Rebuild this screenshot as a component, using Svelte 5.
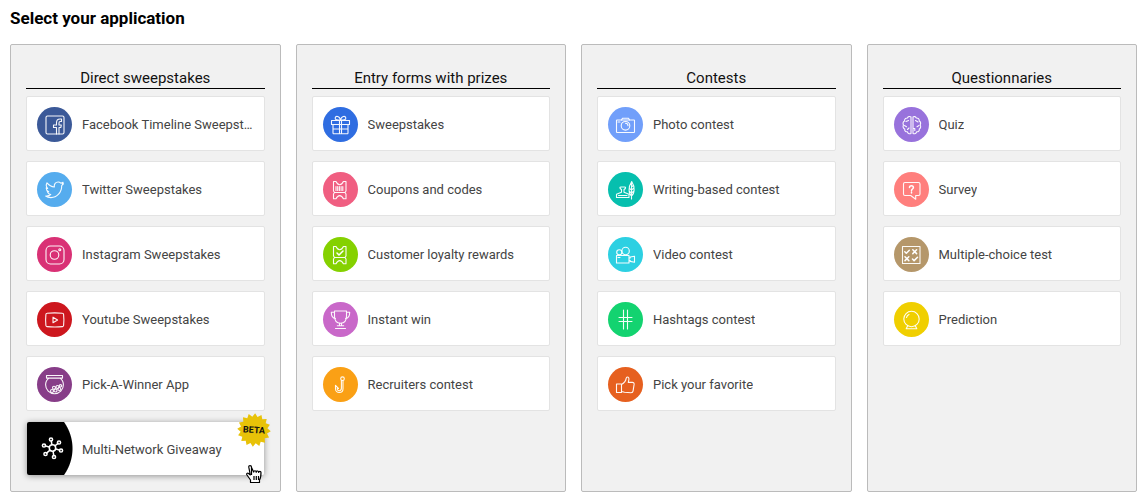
<script>
  const columns = [
    {
      title: 'Direct sweepstakes',
      apps: [
        { name: 'Facebook Timeline Sweepstakes', icon: 'facebook', color: '#3b5998' },
        { name: 'Twitter Sweepstakes', icon: 'twitter', color: '#55acee' },
        { name: 'Instagram Sweepstakes', icon: 'instagram', color: '#d93175' },
        { name: 'Youtube Sweepstakes', icon: 'youtube', color: '#cd171e' },
        { name: 'Pick-A-Winner App', icon: 'bowl', color: '#873d88' },
        { name: 'Multi-Network Giveaway', icon: 'network', color: '#000', beta: true },
      ],
    },
    {
      title: 'Entry forms with prizes',
      apps: [
        { name: 'Sweepstakes', icon: 'gift', color: '#2f6de1' },
        { name: 'Coupons and codes', icon: 'coupon', color: '#f05e81' },
        { name: 'Customer loyalty rewards', icon: 'loyalty', color: '#85d100' },
        { name: 'Instant win', icon: 'trophy', color: '#c968c9' },
        { name: 'Recruiters contest', icon: 'hook', color: '#faa015' },
      ],
    },
    {
      title: 'Contests',
      apps: [
        { name: 'Photo contest', icon: 'camera', color: '#719ffa' },
        { name: 'Writing-based contest', icon: 'writing', color: '#06bfae' },
        { name: 'Video contest', icon: 'video', color: '#2dd0e2' },
        { name: 'Hashtags contest', icon: 'hashtag', color: '#13d370' },
        { name: 'Pick your favorite', icon: 'thumb', color: '#e6601f' },
      ],
    },
    {
      title: 'Questionnaries',
      apps: [
        { name: 'Quiz', icon: 'brain', color: '#9872dc' },
        { name: 'Survey', icon: 'survey', color: '#ff7f7d' },
        { name: 'Multiple-choice test', icon: 'choices', color: '#b5976a' },
        { name: 'Prediction', icon: 'ball', color: '#f0cf00' },
      ],
    },
  ];

  // starburst behind the beta label
  const burst = Array.from({ length: 32 }, (_, i) => {
    const r = i % 2 ? 13.5 : 16.8;
    const a = (i * Math.PI) / 16;
    return `${(17 + r * Math.cos(a)).toFixed(1)},${(17 + r * Math.sin(a)).toFixed(1)}`;
  }).join(' ');

  // the six arms of the network glyph
  const nodes = [[-1.5, -8.5], [6.5, -5.5], [8.5, 2.5], [1.5, 9], [-7, 6], [-8.5, -2.5]];
</script>

{#snippet glyph(icon)}
  <svg class="glyph" viewBox="0 0 35 35" aria-hidden="true">
    {#if icon === 'facebook'}
      <rect x="9" y="9" width="18" height="18" rx="1.5" />
      <path d="M19.5 27v-6.5h-3V18h3v-2.2c0-2.3 1.4-3.8 3.6-3.8h1.4v2.5h-1.2c-.9 0-1.3.5-1.3 1.4V18h2.3l-.4 2.5H22V27" />
    {:else if icon === 'twitter'}
      <path d="M26.5 11.7c-.6 1-1.3 1.4-1.8 1.9.2 7-5 12-10.7 12-2.3 0-4.1-.6-5.3-1.6 2 .2 3.8-.3 5-1.5-1.7-.2-2.9-1.2-3.4-2.8h1.4c-1.7-.8-2.5-2-2.5-3.8l1.5.5c-1.5-1.5-1.8-3.7-.7-5.5 2 2.5 4.3 3.9 7.3 4.1-.4-2.9 1.3-5 3.8-5 1.2 0 2 .5 2.7 1.2l2.300-.9-.8 1.600z" />
    {:else if icon === 'instagram'}
      <rect x="9" y="9" width="18" height="18" rx="4.5" />
      <circle cx="17.5" cy="18" r="4.3" />
      <circle cx="22.8" cy="12.7" r="1" />
    {:else if icon === 'youtube'}
      <path d="M10 11.3q7.5-.8 15.5 0 1 0 1.1 1.2.6 5.5 0 11-.1 1-1.1 1.1-7.5.8-15.5 0-1-.1-1.1-1.1-.6-5.5 0-11 .1-1.2 1.1-1.2zM16 15.200v5.600l4.600-2.800z" />
    {:else if icon === 'bowl'}
      <path d="M9.5 8.500h16v2.600h-16zM12 11.100c-2.200 1.600-3.400 4-3.400 6.700 0 5 4 8.900 8.900 8.900s8.900-3.900 8.900-8.900c0-2.700-1.200-5.100-3.400-6.700" />
      <circle cx="15" cy="24" r="1.5" />
      <circle cx="18.5" cy="23.5" r="1.5" />
      <circle cx="17" cy="20.8" r="1.5" />
      <circle cx="20.5" cy="20" r="1.5" />
      <circle cx="22.3" cy="22" r="1.5" />
      <circle cx="23.5" cy="18.8" r="1.2" />
    {:else if icon === 'network'}
      <g class="bold">
        <circle cx="15.5" cy="16" r="3.2" />
        {#each nodes as [x, y]}
          <path d="M{15.5 + x * 0.4} {16 + y * 0.4}L{15.5 + x * 0.85} {16 + y * 0.85}" />
          <circle cx={15.5 + x} cy={16 + y} r="1.6" />
        {/each}
      </g>
    {:else if icon === 'gift'}
      <path d="M8.5 13.5h18v4h-18zM10 17.5h15V26a.8.8 0 0 1-.8.8H10.800A.8.8 0 0 1 10 26zM16.500 13.500v13M18.500 13.500v13M10 22h15M17.500 13.300c-3 0-5.800-.4-5.300-2.500.5-2 4.300-2.300 5.300 2.500 1-4.800 4.800-4.500 5.300-2.500.5 2.100-2.300 2.500-5.300 2.500z" />
    {:else if icon === 'coupon' || icon === 'loyalty'}
      <path d="M10.500 9.500h2.500q1.500 3.200 3.700 3.200t3.700-3.200h2.600v9.500l-1 1.500 1 1.500v4.800h-2.600q-1.500-3.200-3.700-3.200t-3.700 3.200h-2.500v-4.800l1-1.500-1-1.500zM12 20.500h9.500" />
      {#if icon === 'coupon'}
        <path d="M13 14.500v4M14.700 14.500v4M16.400 14.500v4M18.100 14.500v4M19.800 14.500v4" />
      {:else}
        <path class="bold" d="M14 16l2 2 4-4" />
      {/if}
    {:else if icon === 'trophy'}
      <path d="M11.500 9h12v5c0 4.500-2.500 7.200-6 7.200s-6-2.700-6-7.200zM11.500 10.300H8.300c0 4 1.500 6 4.200 6.300M23.500 10.300h3.200c0 4-1.500 6-4.200 6.300M16.500 21.300v2.500M18.500 21.300v2.500M14.300 23.800h6.400M12.500 26.500h10" />
    {:else if icon === 'hook'}
      <circle cx="19.5" cy="11.7" r="1.8" />
      <path d="M20 13.500v8.300c0 5-7.500 5-7.500 0v-3.500l3 3.200-1.400.2c.3 2.900 4.300 2.500 4.300-.4v-7.800" />
    {:else if icon === 'camera'}
      <rect x="8.5" y="13" width="18" height="12.5" rx=".6" />
      <path d="M13.500 13l1-1.800h6l1 1.800" />
      <circle cx="17.5" cy="18.8" r="4.3" />
      <path d="M17.500 16.300a2.500 2.500 0 0 1 2.500 2.500M10 15h2" />
    {:else if icon === 'writing'}
      <path d="M8.500 25.500v-3.200l5-2v-2.800c-2-.9-2-2.500-.5-2.500h3.500c1.500 0 1.500 1.600-.5 2.500v2.800l5 2v3.200zM10.500 23.500h8.500M23.500 27V11M23.500 24c-3-2-3.500-9 .2-14.500 3.700 5.500 2.800 12.500-.2 14.500zM23.500 15l1.800-1.500M23.500 18l2.500-2M23.500 21l2.500-2M23.500 18l-2-1.500M23.500 21l-2-1.500" />
    {:else if icon === 'video'}
      <circle cx="11.3" cy="15.3" r="2.6" />
      <circle cx="17.6" cy="14" r="3.7" />
      <path d="M8.500 18.500h12.500V26H8.500zM21 21.300l1.200-.4V20l4.300-.8v6l-4.300-.8v-1L21 23M10 20.500h2" />
    {:else if icon === 'hashtag'}
      <path d="M15.500 8v19M19.500 8v19M11 15.500h13M11 19.500h13" />
    {:else if icon === 'thumb'}
      <path d="M8.500 17h5v8.500h-5zM13.500 24.500l3 .8 6.500.4c1.500 0 2-.7 2.100-1.800l1-6.500c.1-1.300-.5-2-1.700-2h-4.100l.6-2.900c.2-1.500-.4-2.500-1.500-2.500-1 0-1.200.5-1.300 1.700-.3 2-1.700 4.300-4.600 5.800" />
    {:else if icon === 'brain'}
      <path d="M17 10v16.500c-1.800.7-3.300-.2-3.600-1.700-1.900.1-3-1-2.700-2.800-1.800-.7-2-2.900-1.200-4-1-1.700-.3-3.500 1-4.100 0-2 1.200-3 2.900-2.900.7-1.500 2.500-2 3.600-1zM19 10v16.500c1.800.7 3.300-.2 3.600-1.700 1.900.1 3-1 2.700-2.800 1.500-.7 1.700-2.900.9-4 .7-1.700.2-3.500-.9-4.100 0-2-1.200-3-2.900-2.900-.6-1.300-2.300-2-3.400-1zM12 14.500l2.500-1M10.500 18.500l2 1.200M13.500 22.500l1.500-1.500M24 15l-2.500-1.500M25 18.500l-2 1.200M19 21.500h1.800v2" />
    {:else if icon === 'survey'}
      <path d="M11 10.500h13.500q1.500 0 1.500 1.500v10q0 1.500-1.500 1.500h-2.800v3.800l-5-3.800H11q-1.500 0-1.500-1.500V12q0-1.500 1.500-1.500z" />
      <path class="bold" d="M15.500 15.500c0-2.400 3.900-2.300 3.900 0 0 1.500-1.900 1.500-1.900 3.200M17.500 20.200v.9" />
    {:else if icon === 'choices'}
      <rect x="8.5" y="9.5" width="17.5" height="17" />
      <path class="bold" d="M10.800 14.800l1.500 1.500 3-3M18.800 12.800l3.800 3.800M22.600 12.800l-3.800 3.800M11 19.800l3.800 3.800M14.800 19.800L11 23.600M18.500 22l1.600 1.600 3.400-3.400" />
    {:else if icon === 'ball'}
      <circle cx="17.5" cy="17" r="7.7" />
      <path d="M13.700 23.800l-1.500 2.900h10.600l-1.500-2.900M12.500 15.500c.4-1.400 1.200-2.400 2.500-3" />
    {/if}
  </svg>
{/snippet}

<main>
  <h1>Select your application</h1>

  <div class="columns">
    {#each columns as column}
      <section class="column">
        <h2>{column.title}</h2>
        <ul>
          {#each column.apps as app}
            <li>
              <a class="app" class:active={app.beta} href="#{app.icon}">
                <span class="icon" style="background-color: {app.color}">
                  {@render glyph(app.icon)}
                </span>
                <span class="name">{app.name}</span>
              </a>
              {#if app.beta}
                <span class="badge">
                  <svg viewBox="0 0 34 34" aria-hidden="true"><polygon points={burst} /></svg>
                  <span>BETA</span>
                </span>
                <svg class="pointer" viewBox="0 0 18 20" aria-hidden="true">
                  <path d="M5.500 11V3.200c0-2.200-3-2.200-2.700 0L4.300 11 2.600 9.500C1.300 8.500.2 9.800 1 11l3.500 5v2.500h9V16c1.200-1.800 1.500-3.500 1.500-7.500 0-1.500-2.300-1.600-2.300 0 0-2-2.500-2-2.500-.2 0-2-2.500-2-2.500-.2L5.500 3.500M8 12v4M10.300 12v4M12.500 12v4" />
                </svg>
              {/if}
            </li>
          {/each}
        </ul>
      </section>
    {/each}
  </div>
</main>

<style>
  :global(body) {
    margin: 0;
    background: #fff;
    font-family: Roboto, "Liberation Sans", sans-serif;
  }

  main {
    padding: 8px 9px 8px 10px;
  }

  h1 {
    margin: 0 0 16px;
    font-size: 17px;
    line-height: 20px;
    font-weight: 700;
    color: #000;
  }

  .columns {
    display: grid;
    grid-template-columns: repeat(4, minmax(0, 1fr));
    gap: 15px;
  }

  .column {
    padding: 23px 15px 15px;
    border: 1px solid #bbb;
    border-radius: 2px;
    background: #f1f1f1;
  }

  h2 {
    margin: 0 0 7px;
    border-bottom: 1px solid #000;
    font-size: 15px;
    line-height: 20px;
    font-weight: 400;
    text-align: center;
    color: #111;
  }

  ul {
    display: flex;
    flex-direction: column;
    gap: 10px;
    margin: 0;
    padding: 0;
    list-style: none;
  }

  li {
    position: relative;
  }

  .app {
    display: flex;
    align-items: center;
    gap: 10px;
    padding: 10px 10px 8px;
    border: 1px solid #e3e3e3;
    border-radius: 2px;
    background: #fff;
    color: #444;
    text-decoration: none;
  }

  .app.active {
    margin: 1px;
    border: 0;
    background: radial-gradient(circle at 0 50%, #000 45px, #fff 46px);
    box-shadow: 0 1px 6px rgba(0, 0, 0, 0.4);
  }

  .icon {
    flex: none;
    width: 35px;
    height: 35px;
    border-radius: 50%;
  }

  .glyph {
    display: block;
    fill: none;
    stroke: #fff;
    stroke-width: 1.1;
    stroke-linejoin: round;
    stroke-linecap: round;
    stroke-opacity: 0.95;
  }

  .bold {
    stroke-width: 1.5;
    stroke-opacity: 1;
  }

  .name {
    overflow: hidden;
    font-size: 13px;
    line-height: 20px;
    white-space: nowrap;
    text-overflow: ellipsis;
  }

  .badge {
    position: absolute;
    top: -8px;
    right: -6px;
    display: grid;
    place-items: center;
    width: 34px;
    height: 34px;
    font-size: 9px;
    font-weight: 700;
    color: #111;
    transform: rotate(4deg);
  }

  .badge > * {
    grid-area: 1 / 1;
  }

  .badge polygon {
    fill: #e8c208;
  }

  .pointer {
    position: absolute;
    right: 1px;
    bottom: -8px;
    width: 18px;
    height: 20px;
    fill: #fff;
    stroke: #000;
    stroke-width: 1.2;
    stroke-linejoin: round;
  }
</style>
